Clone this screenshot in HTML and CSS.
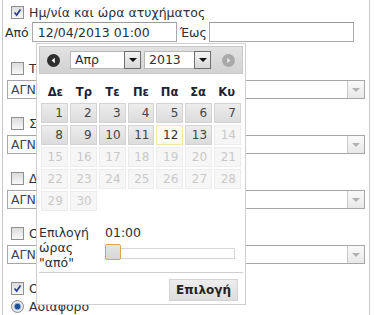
FILE: index.html
```html
<!DOCTYPE html>
<html lang="el">
<head>
  <meta charset="UTF-8">
  <title>Ημ/νία και ώρα ατυχήματος</title>
  <link rel="stylesheet" href="styles.css">
</head>
<body>
  <div class="panel">
    <div class="check-row first">
      <span class="cb checked"><svg viewBox="0 0 13 13"><path d="M3 6.5 L5.5 9.5 L10 3" fill="none" stroke="#2b3f8f" stroke-width="2"/></svg></span>
      <span class="lbl">Ημ/νία και ώρα ατυχήματος</span>
    </div>
    <div class="range-row">
      <span class="lbl">Από</span>
      <span class="txt from">12/04/2013 01:00</span>
      <span class="lbl">Έως</span>
      <span class="txt to"></span>
    </div>

    <div class="group">
      <div class="check-row"><span class="cb"></span><span class="lbl">Τύπος</span></div>
      <div class="sel"><span class="sel-text">ΑΓΝΩΣΤΟ</span><span class="sel-btn"><i></i></span></div>
    </div>
    <div class="group">
      <div class="check-row"><span class="cb"></span><span class="lbl">Σοβαρότητα</span></div>
      <div class="sel"><span class="sel-text">ΑΓΝΩΣΤΟ</span><span class="sel-btn"><i></i></span></div>
    </div>
    <div class="group">
      <div class="check-row"><span class="cb"></span><span class="lbl">Δρόμος</span></div>
      <div class="sel"><span class="sel-text">ΑΓΝΩΣΤΟ</span><span class="sel-btn"><i></i></span></div>
    </div>
    <div class="group">
      <div class="check-row"><span class="cb"></span><span class="lbl">Οδόστρωμα</span></div>
      <div class="sel"><span class="sel-text">ΑΓΝΩΣΤΟ</span><span class="sel-btn"><i></i></span></div>
    </div>
    <div class="group">
      <div class="check-row"><span class="cb checked"><svg viewBox="0 0 13 13"><path d="M3 6.5 L5.5 9.5 L10 3" fill="none" stroke="#2b3f8f" stroke-width="2"/></svg></span><span class="lbl">Ορατότητα</span></div>
      <div class="radio-row"><span class="radio"></span><span class="lbl">Αδιάφορο</span></div>
    </div>

    <div class="dp">
      <div class="dp-head">
        <span class="nav prev"><svg viewBox="0 0 13 13"><circle cx="6.5" cy="6.5" r="6.5" fill="#2e2e2e"/><path d="M7.8 3.8 L4.6 6.5 L7.8 9.2 Z" fill="#fff"/></svg></span>
        <span class="dsel month"><span>Απρ</span><span class="dsel-btn"><i></i></span></span>
        <span class="dsel year"><span>2013</span><span class="dsel-btn"><i></i></span></span>
        <span class="nav next"><svg viewBox="0 0 13 13"><circle cx="6.5" cy="6.5" r="6.5" fill="#a9a9a9"/><path d="M5.2 3.8 L8.4 6.5 L5.2 9.2 Z" fill="#e6e6e6"/></svg></span>
      </div>
      <div class="days">
        <span>Δε</span><span>Τρ</span><span>Τε</span><span>Πε</span><span>Πα</span><span>Σα</span><span>Κυ</span>
      </div>
      <div class="cal">
        <span class="d">1</span><span class="d">2</span><span class="d">3</span><span class="d">4</span><span class="d">5</span><span class="d">6</span><span class="d">7</span>
        <span class="d">8</span><span class="d">9</span><span class="d">10</span><span class="d">11</span><span class="d today">12</span><span class="d">13</span><span class="d off">14</span>
        <span class="d off">15</span><span class="d off">16</span><span class="d off">17</span><span class="d off">18</span><span class="d off">19</span><span class="d off">20</span><span class="d off">21</span>
        <span class="d off">22</span><span class="d off">23</span><span class="d off">24</span><span class="d off">25</span><span class="d off">26</span><span class="d off">27</span><span class="d off">28</span>
        <span class="d off">29</span><span class="d off">30</span>
      </div>
      <div class="time">
        <div class="time-lbl">Επιλογή ώρας "από"</div>
        <div class="time-ctl">
          <div class="time-val">01:00</div>
          <div class="slider"><span class="handle"></span></div>
        </div>
      </div>
      <div class="dp-foot">
        <span class="btn">Επιλογή</span>
      </div>
    </div>
  </div>
</body>
</html>
```

FILE: styles.css
```css
body {
  margin: 0;
  background: #fff;
  font-family: "DejaVu Sans", Verdana, sans-serif;
  font-size: 12.5px;
  color: #2a2f3a;
  overflow: hidden;
}
.panel {
  position: relative;
  margin-left: 2px;
  width: 366px;
  height: 330px;
  border-left: 1px solid #c8c8c8;
  border-right: 1px solid #c8c8c8;
}
.check-row {
  display: flex;
  align-items: center;
  height: 17px;
  padding-left: 8px;
}
.check-row.first {
  padding-top: 4px;
}
.cb {
  width: 11px;
  height: 11px;
  border: 1px solid #8e8f8f;
  background: linear-gradient(#dcdcdc, #f8f8f8);
  margin-right: 5px;
  display: inline-flex;
  flex: none;
}
.cb svg {
  width: 11px;
  height: 11px;
}
.lbl {
  white-space: nowrap;
}
.range-row {
  display: flex;
  align-items: center;
  height: 22px;
  padding-left: 2px;
}
.txt {
  border: 1px solid #a9a9a9;
  border-top-color: #999;
  display: inline-flex;
  align-items: center;
  padding-left: 5px;
  box-sizing: border-box;
  height: 20px;
  font-size: 12.5px;
}
.txt.from {
  width: 145px;
  margin: 0 3px 0 3px;
}
.txt.to {
  width: 145px;
  margin-left: 2px;
}
.group {
  margin-top: 16px;
}
.range-row + .group {
  margin-top: 17px;
}
.sel {
  display: flex;
  margin: 3px 0 0 4px;
  width: 358px;
  height: 19px;
  border: 1px solid #a6a6a6;
  box-sizing: border-box;
}
.sel-text {
  flex: 1;
  padding-left: 3px;
  line-height: 17px;
  color: #3c4656;
}
.sel-btn {
  width: 16px;
  border-left: 1px solid #c9c9c9;
  background: linear-gradient(#fafafa, #e8e8e8);
  display: flex;
  align-items: center;
  justify-content: center;
}
.sel-btn i {
  border-left: 4px solid transparent;
  border-right: 4px solid transparent;
  border-top: 4px solid #b2b2b2;
}
.radio-row {
  display: flex;
  align-items: center;
  height: 17px;
  padding-left: 8px;
  margin-top: 1px;
}
.radio {
  width: 11px;
  height: 11px;
  border-radius: 50%;
  border: 1px solid #8a8a8a;
  background: radial-gradient(circle, #1d4f9a 0 2.5px, #7aa6d8 3px, #e6e6e6 4px);
  margin-right: 5px;
}

/* datepicker */
.dp {
  position: absolute;
  left: 33px;
  top: 43px;
  width: 204px;
  padding: 2px;
  background: #fff;
  border: 1px solid #cfcfcf;
}
.dp-head {
  display: flex;
  align-items: center;
  height: 26px;
  border: 1px solid #c9c9c9;
  background: linear-gradient(#e2e2e2, #d2d2d2);
  padding-left: 7px;
}
.nav {
  width: 13px;
  height: 13px;
  display: inline-flex;
}
.nav svg {
  width: 13px;
  height: 13px;
}
.nav.next {
  margin-left: 11px;
}
.dsel {
  display: flex;
  height: 18px;
  background: #fff;
  border: 1px solid #b8b8b8;
  box-sizing: border-box;
  font-size: 12.5px;
}
.dsel span:first-child {
  flex: 1;
  padding-left: 4px;
  line-height: 16px;
}
.dsel.month {
  width: 71px;
  margin-left: 10px;
}
.dsel.year {
  width: 67px;
  margin-left: 3px;
}
.dsel-btn {
  width: 15px;
  border: 1px solid #6e6e6e;
  background: linear-gradient(#f4f4f4, #d8d8d8);
  display: flex;
  align-items: center;
  justify-content: center;
  margin: -1px -1px -1px 0;
}
.dsel-btn i {
  border-left: 4px solid transparent;
  border-right: 4px solid transparent;
  border-top: 4px solid #111;
}
.days {
  display: grid;
  grid-template-columns: repeat(7, 1fr);
  width: 200px;
  margin: 8px 0 0 2px;
  height: 20px;
  line-height: 20px;
  font-weight: bold;
  font-size: 11.5px;
  color: #1c1f3a;
  text-align: center;
}
.cal {
  display: grid;
  grid-template-columns: repeat(7, 1fr);
  grid-auto-rows: 20px;
  gap: 2px;
  width: 200px;
  margin: 1px 0 0 2px;
}
.d {
  border: 1px solid #d3d3d3;
  background: linear-gradient(#ededed, #dcdcdc);
  color: #444;
  text-align: right;
  padding-right: 4px;
  line-height: 18px;
  font-size: 12px;
}
.d.today {
  border-color: #f5e7a6;
  background: #fcfbf0;
  color: #333;
}
.d.off {
  border-color: #ececec;
  background: #f6f6f6;
  color: #c9c9c9;
}
.time {
  display: flex;
  margin-top: 14px;
  height: 47px;
}
.time-lbl {
  width: 66px;
  line-height: 15px;
}
.time-ctl {
  flex: 1;
}
.time-val {
  line-height: 15px;
}
.slider {
  position: relative;
  margin-top: 8px;
  width: 128px;
  height: 9px;
  border: 1px solid #d6d6d6;
}
.handle {
  position: absolute;
  left: -1px;
  top: -5px;
  width: 14px;
  height: 14px;
  border: 1px solid #dea54a;
  border-radius: 2px;
  background: linear-gradient(#e6e6e6, #d6d6d6);
}
.dp-foot {
  border-top: 1px solid #cfcfcf;
  padding: 6px 5px 1px 0;
  display: flex;
  justify-content: flex-end;
}
.btn {
  height: 20px;
  line-height: 20px;
  padding: 0 6px;
  border: 1px solid #d3d3d3;
  background: linear-gradient(#eeeeee, #dddddd);
  font-weight: bold;
  font-size: 12px;
  color: #222;
}
```
